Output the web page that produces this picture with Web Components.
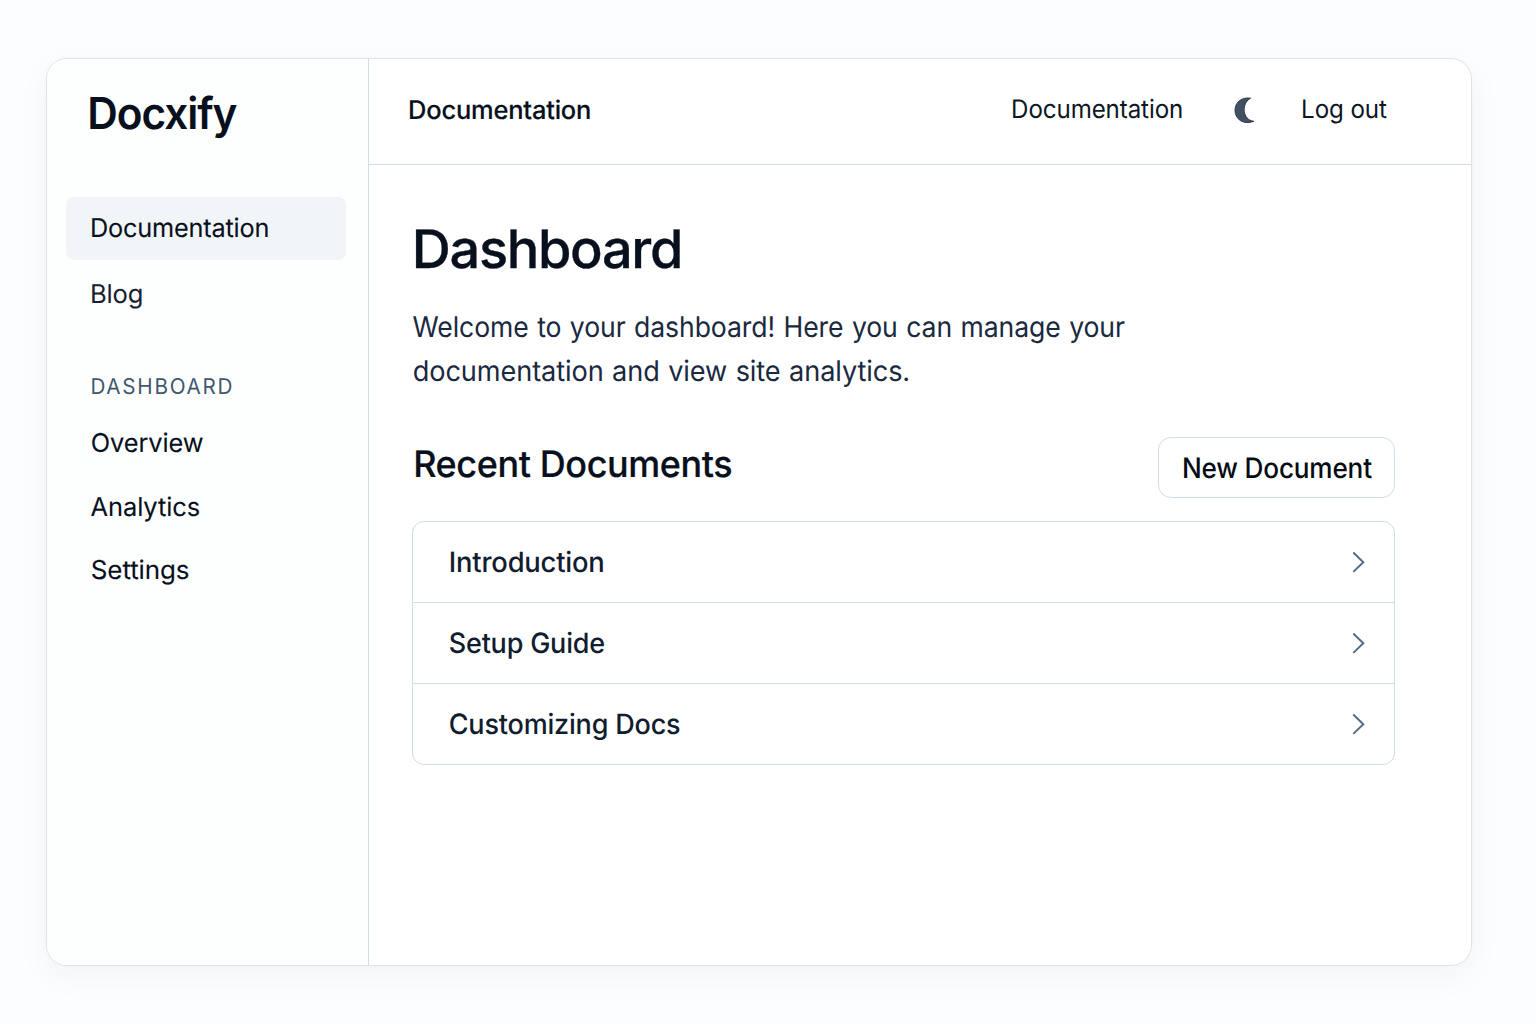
<!DOCTYPE html>
<html lang="en">
<head>
<meta charset="utf-8">
<title>Docxify</title>
<style>
  html, body { margin: 0; height: 100%; }
  body {
    box-sizing: border-box; width: 1536px; height: 1024px; padding: 58px 64px 58px 46px;
    background: #fcfdfe; overflow: hidden;
    font-family: Inter, "Liberation Sans", sans-serif; color: #07101c;
  }
</style>
</head>
<body>
<docs-app>
  <side-bar slot="side">
    <side-brand><fit-text size="44" weight="600" spacing="-1.1" width="147">Docxify</fit-text></side-brand>
    <nav-item active><fit-text size="25.9" weight="400" stroke=".1" spacing="-.2" width="175.6">Documentation</fit-text></nav-item>
    <nav-item soft><fit-text size="25.9" weight="400" spacing="-.2" width="49.7">Blog</fit-text></nav-item>
    <nav-label><fit-text size="21.8" weight="400" spacing="1.8" width="139.4">DASHBOARD</fit-text></nav-label>
    <nav-item><fit-text size="25.9" weight="400" stroke=".1" spacing="-.1" width="111">Overview</fit-text></nav-item>
    <nav-item tight><fit-text size="25.9" weight="400" stroke=".1" spacing="-.1" width="108">Analytics</fit-text></nav-item>
    <nav-item><fit-text size="25.9" weight="400" stroke=".1" spacing="-.1" width="96.5">Settings</fit-text></nav-item>
  </side-bar>
  <top-bar slot="top">
    <fit-text size="25.8" weight="500" stroke=".15" spacing="-.2" width="179.6">Documentation</fit-text>
    <fit-text slot="link" size="25.6" weight="400" spacing="-.1" width="168.5">Documentation</fit-text>
    <moon-icon slot="theme"></moon-icon>
    <fit-text slot="exit" size="25.6" weight="400" spacing="-.1" width="83.5">Log out</fit-text>
  </top-bar>
  <page-body slot="main">
    <fit-text slot="title" size="53" weight="500" stroke=".35" spacing="-1.3" width="263.5">Dashboard</fit-text>
    <fit-text slot="intro" size="28.5" weight="400" spacing="-.1" words="1.2" width="711.5">Welcome to your dashboard! Here you can manage your</fit-text>
    <fit-text slot="intro" style="margin-left: .6px" size="28.5" weight="400" spacing="-.1" words="1" width="494.3">documentation and view site analytics.</fit-text>
    <fit-text slot="heading" size="36.6" weight="500" stroke=".2" spacing="-.4" width="315.5">Recent Documents</fit-text>
    <action-button slot="action"><fit-text size="28.2" weight="500" spacing="-.2" width="187.8">New Document</fit-text></action-button>
    <doc-list>
      <doc-row><fit-text size="28" weight="500" spacing="-.2" width="151.8">Introduction</fit-text></doc-row>
      <doc-row><fit-text size="28" weight="500" spacing="-.2" width="154">Setup Guide</fit-text></doc-row>
      <doc-row><fit-text size="28" weight="500" spacing="-.2" width="229.6">Customizing Docs</fit-text></doc-row>
    </doc-list>
  </page-body>
</docs-app>

<script>
const define = (name, html) => {
  const template = document.createElement('template');
  template.innerHTML = html;
  customElements.define(name, class extends HTMLElement {
    constructor() {
      super();
      this.attachShadow({ mode: 'open' }).append(template.content.cloneNode(true));
    }
  });
};

/* A single line of text, condensed so that its ink spans exactly `width` pixels. */
const ruler = document.createElement('canvas').getContext('2d');
const RULER_SIZE = 1000;
class FitText extends HTMLElement {
  connectedCallback() {
    if (this.shadowRoot) return;
    const number = name => parseFloat(this.getAttribute(name) || 0);
    const size = number('size'), spacing = number('spacing'), words = number('words'), width = number('width');
    const weight = this.getAttribute('weight');
    const unit = size / RULER_SIZE;
    ruler.font = `${weight} ${RULER_SIZE}px Inter, "Liberation Sans", sans-serif`;
    ruler.letterSpacing = `${spacing / unit}px`;
    ruler.wordSpacing = `${words / unit}px`;
    const m = ruler.measureText(this.textContent);
    const start = -m.actualBoundingBoxLeft * unit;
    const scale = width / (m.actualBoundingBoxRight * unit - start);
    this.attachShadow({ mode: 'open' }).innerHTML = `
      <style>
        :host { display: block; flex: none; width: ${width}px; height: ${size}px; }
        span {
          display: block; width: max-content; white-space: pre; text-rendering: geometricPrecision;
          font-size: ${size}px; line-height: ${size}px; font-weight: ${weight};
          -webkit-text-stroke: ${number('stroke')}px currentColor;
          letter-spacing: ${spacing}px; word-spacing: ${words}px; transform-origin: 0 50%;
          transform: scaleX(${scale}) translateX(${-start}px);
        }
      </style>
      <span><slot></slot></span>`;
  }
}

define('docs-app', `
  <style>
    :host {
      box-sizing: border-box; display: grid; width: 1426px; height: 908px;
      grid-template-columns: 322px 1fr; grid-template-rows: 106px 1fr;
      border: 1px solid #dfe4e9; border-radius: 21px; background: #fff; overflow: hidden;
      box-shadow: 0 10px 34px rgba(30, 41, 59, .045), 0 1px 5px rgba(30, 41, 59, .02);
    }
    slot[name=side] { display: block; grid-row: 1 / 3; }
    slot { display: block; min-width: 0; }
  </style>
  <slot name="side"></slot><slot name="top"></slot><slot name="main"></slot>`);

define('side-bar', `
  <style>
    :host {
      box-sizing: border-box; display: flex; flex-direction: column; height: 100%;
      padding: 35.6px 22px 0 19px; border-right: 1px solid #cfdfea; background: #fdfefe;
    }
  </style><slot></slot>`);

define('side-brand', `
  <style>
    :host { display: flex; align-items: center; height: 37px; padding-left: 23.8px; margin-bottom: 65px; }
  </style><slot></slot>`);

define('nav-item', `
  <style>
    :host {
      box-sizing: border-box; display: flex; align-items: center; height: 63px; flex: none;
      padding: 1.4px 0 0 25.7px; margin-bottom: .9px; border-radius: 8px; color: #07101c;
    }
    :host([active]) { background: #f1f5f8; margin-bottom: 2.8px; }
    :host([soft]) { color: #15202f; }
    :host([tight]) { margin-bottom: 0; padding-left: 24.8px; }
  </style><slot></slot>`);

define('nav-label', `
  <style>
    :host { display: flex; align-items: center; height: 24px; padding-left: 26.2px; margin: 49.6px 0 12px; color: #42566c; }
  </style><slot></slot>`);

define('top-bar', `
  <style>
    :host {
      box-sizing: border-box; display: flex; align-items: center; height: 106px;
      padding: 0 85px 2px 40.8px; border-bottom: 1px solid #cfdfea; color: #07101c;
    }
    nav { display: flex; align-items: center; margin: 0 0 1px auto; color: #0c1624; }
    .theme { display: block; margin: 0 48px 0 52.5px; }
  </style>
  <slot></slot>
  <nav><slot name="link"></slot><slot class="theme" name="theme"></slot><slot name="exit"></slot></nav>`);

define('moon-icon', `
  <style>:host { display: block; width: 21px; height: 27px; } svg { display: block; }</style>
  <svg width="21" height="27" viewBox="0 0 21 27">
    <path d="M16.6 1.2C7.4-.3 1 5.6 1 13.3c0 8.6 8.2 15.2 18.8 11C8.6 23.2 6.6 6.8 16.6 1.2Z"
      fill="#435061" stroke="#2b3a4d" stroke-width="1" stroke-linejoin="round"/>
  </svg>`);

define('page-body', `
  <style>
    :host { display: block; padding: 58px 76px 0 43px; }
    .title { height: 53px; padding-left: 4.2px; }
    .intro { display: grid; gap: 16px; height: 73px; padding: 36.6px 0 0 1.3px; color: #1a2940; }
    .bar { display: flex; justify-content: space-between; align-items: center; height: 61px; margin: 51.4px 0 23px; }
    .heading { display: block; padding: 0 0 6px 3.8px; }
  </style>
  <div class="title"><slot name="title"></slot></div>
  <div class="intro"><slot name="intro"></slot></div>
  <div class="bar"><slot class="heading" name="heading"></slot><slot name="action"></slot></div>
  <slot></slot>`);

define('action-button', `
  <style>
    :host {
      box-sizing: border-box; display: flex; align-items: center; justify-content: center;
      width: 237px; height: 61px; padding: 1px 0 0 2px; border: 1px solid #cfdfea; border-radius: 13px; color: #050b14;
    }
  </style><slot></slot>`);

define('doc-list', `
  <style>
    :host { display: block; border: 1px solid #cddeea; border-radius: 12px; color: #111d2e; }
  </style><slot></slot>`);

define('doc-row', `
  <style>
    :host {
      box-sizing: border-box; display: flex; align-items: center; justify-content: space-between;
      height: 81px; padding: 1px 29px 0 36.8px; border-bottom: 1px solid #cddeea;
    }
    :host(:first-child) { padding-left: 37.6px; }
    :host(:last-child) { border-bottom: 0; height: 80px; }
    svg { display: block; }
  </style>
  <slot></slot>
  <svg width="14" height="22" viewBox="0 0 14 22" fill="none" stroke="#566c84" stroke-width="2">
    <path d="M2.3 1.5 12.3 11.2 2.3 20.9"/>
  </svg>`);

customElements.define('fit-text', FitText);
</script>
</body>
</html>
